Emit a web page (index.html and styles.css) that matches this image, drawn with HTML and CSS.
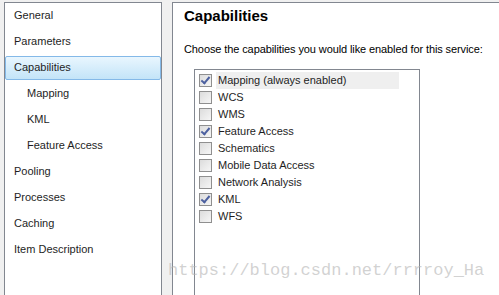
FILE: index.html
```html
<!DOCTYPE html>
<html lang="en">
<head>
    <meta charset="UTF-8">
    <title>Service Properties - Capabilities</title>
    <link rel="stylesheet" href="styles.css">
</head>
<body>
    <div class="window">

        <!-- Navigation list -->
        <ul class="nav">
            <li class="nav-item">General</li>
            <li class="nav-item">Parameters</li>
            <li class="nav-item selected">Capabilities</li>
            <li class="nav-item sub">Mapping</li>
            <li class="nav-item sub">KML</li>
            <li class="nav-item sub">Feature Access</li>
            <li class="nav-item">Pooling</li>
            <li class="nav-item">Processes</li>
            <li class="nav-item">Caching</li>
            <li class="nav-item">Item Description</li>
        </ul>

        <!-- Capabilities page -->
        <div class="page">
            <h1 class="page-title">Capabilities</h1>
            <p class="page-text">Choose the capabilities you would like enabled for this service:</p>

            <ul class="cap-list">
                <li class="cap active"><span class="box checked"></span><span class="cap-name">Mapping (always enabled)</span></li>
                <li class="cap"><span class="box"></span><span class="cap-name">WCS</span></li>
                <li class="cap"><span class="box"></span><span class="cap-name">WMS</span></li>
                <li class="cap"><span class="box checked"></span><span class="cap-name">Feature Access</span></li>
                <li class="cap"><span class="box"></span><span class="cap-name">Schematics</span></li>
                <li class="cap"><span class="box"></span><span class="cap-name">Mobile Data Access</span></li>
                <li class="cap"><span class="box"></span><span class="cap-name">Network Analysis</span></li>
                <li class="cap"><span class="box checked"></span><span class="cap-name">KML</span></li>
                <li class="cap"><span class="box"></span><span class="cap-name">WFS</span></li>
            </ul>
        </div>
    </div>

    <div class="watermark">https://blog.csdn.net/rrrroy_Ha</div>
</body>
</html>
```

FILE: styles.css
```css
/* Global */
body, html {
    margin: 0;
    padding: 0;
    height: 100%;
    overflow: hidden;
    background-color: #f0f0f0;
    font-family: "Liberation Sans", Tahoma, sans-serif;
    font-size: 11px;
    color: #000;
}

.window {
    display: flex;
    align-items: flex-start;
    gap: 10px;
    padding: 2px 0 0 4px;
}

/* Navigation list */
.nav {
    flex-shrink: 0;
    list-style: none;
    margin: 0;
    padding: 0;
    width: 156px;
    height: 320px;
    background-color: #fff;
    border: 1px solid #828790;
}

.nav-item {
    height: 26px;
    line-height: 24px;
    padding-left: 9px;
    box-sizing: border-box;
    color: #1e1e1e;
}

.nav-item.sub {
    padding-left: 22px;
}

.nav-item.selected {
    height: 24px;
    line-height: 21px;
    margin: 1px 0 1px 0;
    padding-left: 8px;
    border: 1px solid #84b9e8;
    border-radius: 2px;
    background: linear-gradient(#e9f6fe, #c3e4f8);
}

/* Capabilities page */
.page {
    flex-shrink: 0;
    width: 340px;
    height: 320px;
    background-color: #fff;
    border: 1px solid #828790;
    padding: 0 0 0 11px;
    box-sizing: border-box;
}

.page-title {
    margin: 2px 0 0 0;
    font-size: 15px;
    font-weight: bold;
    line-height: 22px;
}

.page-text {
    margin: 14px 0 0 0;
    line-height: 16px;
    white-space: nowrap;
    letter-spacing: -0.1px;
}

.cap-list {
    list-style: none;
    margin: 12px 0 0 10px;
    padding: 2px 0 0 4px;
    width: 220px;
    height: 240px;
    border: 1px solid #828790;
}

.cap {
    display: flex;
    align-items: center;
    height: 17px;
}

.cap-name {
    flex: 1;
    height: 17px;
    line-height: 17px;
    margin-left: 4px;
    padding-left: 2px;
    color: #1e1e1e;
}

.cap.active .cap-name {
    margin-right: 20px;
    background-color: #efefef;
}

/* Checkbox */
.box {
    position: relative;
    width: 11px;
    height: 11px;
    border: 1px solid #8f8f8f;
    background: linear-gradient(135deg, #dcdcdc, #f6f6f6);
}

.box.checked::after {
    content: "";
    position: absolute;
    left: 3px;
    top: 0px;
    width: 3px;
    height: 7px;
    border: solid #4d61a0;
    border-width: 0 2px 2px 0;
    transform: rotate(40deg);
}

/* Watermark over the page */
.watermark {
    position: absolute;
    left: 168px;
    top: 261px;
    font-family: "Liberation Mono", monospace;
    font-size: 17px;
    color: rgba(180, 180, 180, 0.6);
}
```
